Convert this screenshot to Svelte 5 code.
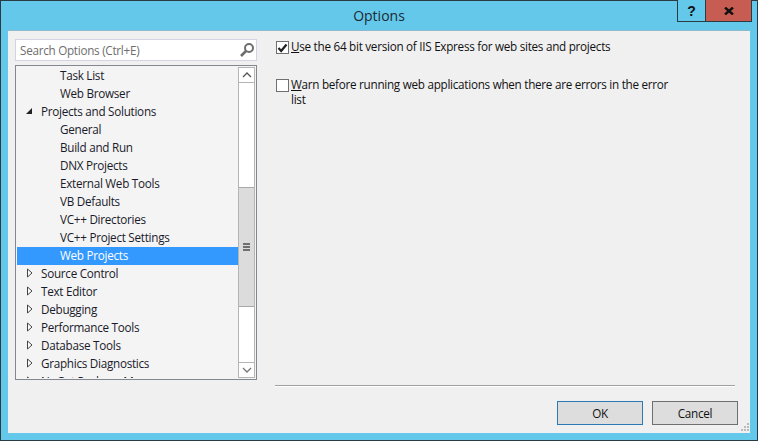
<script>
  const rows = [
    { label: "Task List", depth: 1 },
    { label: "Web Browser", depth: 1 },
    { label: "Projects and Solutions", depth: 0, open: true },
    { label: "General", depth: 1 },
    { label: "Build and Run", depth: 1 },
    { label: "DNX Projects", depth: 1 },
    { label: "External Web Tools", depth: 1 },
    { label: "VB Defaults", depth: 1 },
    { label: "VC++ Directories", depth: 1 },
    { label: "VC++ Project Settings", depth: 1 },
    { label: "Web Projects", depth: 1, selected: true },
    { label: "Source Control", depth: 0 },
    { label: "Text Editor", depth: 0 },
    { label: "Debugging", depth: 0 },
    { label: "Performance Tools", depth: 0 },
    { label: "Database Tools", depth: 0 },
    { label: "Graphics Diagnostics", depth: 0 },
    { label: "NuGet Package Manager", depth: 0 },
  ];
</script>

<div class="window">
  <header class="titlebar">
    <span class="title">Options</span>
    <div class="controls">
      <button class="help">?</button>
      <button class="close">
        <svg width="10" height="8" viewBox="0 0 10 8">
          <path d="M1 0.5 L9 7.5 M9 0.5 L1 7.5" stroke="#111" stroke-width="2.4" fill="none" />
        </svg>
      </button>
    </div>
  </header>

  <div class="client">
    <div class="main">
      <aside class="side">
        <div class="search">
          <span>Search Options (Ctrl+E)</span>
          <svg width="16" height="16" viewBox="0 0 16 16">
            <circle cx="10" cy="6" r="4" fill="none" stroke="#6e6e6e" stroke-width="2" />
            <path d="M7 9 L2 14" stroke="#6e6e6e" stroke-width="2.6" />
          </svg>
        </div>
        <div class="tree">
          <div class="rows">
            {#each rows as row}
              <div class="row" class:selected={row.selected} class:child={row.depth === 1}>
                {#if row.depth === 0}
                  <svg class="arrow" width="8" height="10" viewBox="0 0 8 10">
                    {#if row.open}
                      <path d="M1 8 L7 8 L7 2 Z" fill="#222" />
                    {:else}
                      <path d="M2.5 1 L7 5 L2.5 9 Z" fill="#fff" stroke="#444" />
                    {/if}
                  </svg>
                {/if}
                <span>{row.label}</span>
              </div>
            {/each}
          </div>
          <div class="scrollbar">
            <div class="sb-btn">
              <svg width="10" height="6" viewBox="0 0 10 6"><path d="M1 5 L5 1 L9 5" fill="none" stroke="#555" stroke-width="1.3" /></svg>
            </div>
            <div class="track upper"></div>
            <div class="thumb"><i></i><i></i><i></i></div>
            <div class="track"></div>
            <div class="sb-btn">
              <svg width="10" height="6" viewBox="0 0 10 6"><path d="M1 1 L5 5 L9 1" fill="none" stroke="#777" stroke-width="1.3" /></svg>
            </div>
          </div>
        </div>
      </aside>

      <section class="page">
        <label class="check">
          <span class="box">
            <svg width="11" height="10" viewBox="0 0 11 10"><path d="M1.5 5 L4.2 8 L9.5 1.5" fill="none" stroke="#222" stroke-width="2.2" /></svg>
          </span>
          <span class="text"><u>U</u>se the 64 bit version of IIS Express for web sites and projects</span>
        </label>
        <label class="check">
          <span class="box"></span>
          <span class="text"><u>W</u>arn before running web applications when there are errors in the error list</span>
        </label>
      </section>
    </div>

    <footer class="footer">
      <div class="rule"></div>
      <div class="buttons">
        <button class="btn default">OK</button>
        <button class="btn">Cancel</button>
      </div>
    </footer>
    <svg class="grip" width="9" height="9" viewBox="0 0 9 9">
      <path d="M7 0h2v2h-2z M4 3h2v2h-2z M7 3h2v2h-2z M1 6h2v2h-2z M4 6h2v2h-2z M7 6h2v2h-2z" fill="#bbb" />
    </svg>
  </div>
</div>

<style>
  :global(body) {
    margin: 0;
    font-family: "Open Sans", "Noto Sans", sans-serif;
  }

  .window {
    width: 758px;
    height: 441px;
    box-sizing: border-box;
    background: #63c8ea;
    border: 1px solid #2b3b44;
    padding: 0 7px 7px;
    display: flex;
    flex-direction: column;
    color: #111;
    font-size: 11.7px;
    letter-spacing: -0.27px;
  }

  .titlebar {
    height: 29px;
    flex: none;
    position: relative;
    display: flex;
    justify-content: center;
    align-items: center;
  }

  .title {
    font-size: 14px;
    letter-spacing: 0;
    color: #1b2a33;
  }

  .controls {
    position: absolute;
    top: -1px;
    right: -2px;
    display: flex;
    border: 1px solid #2b3b44;
    border-top: 0;
    height: 21px;
  }

  .controls button {
    border: 0;
    padding: 0;
    margin: 0;
    display: flex;
    align-items: center;
    justify-content: center;
  }

  .help {
    width: 28px;
    background: #63c8ea;
    border-right: 1px solid #2b3b44 !important;
    font: bold 14px "Liberation Sans", sans-serif;
    color: #111;
  }

  .close {
    width: 45px;
    background: #c75d52;
  }

  .client {
    flex: 1;
    background: #f0f0f0;
    position: relative;
    display: flex;
    flex-direction: column;
    border-top: 1px solid #8fb8cc;
    min-height: 0;
  }

  .main {
    flex: 1;
    display: flex;
    min-height: 0;
    padding: 8px 0 0 7px;
  }

  .side {
    width: 242px;
    flex: none;
    display: flex;
    flex-direction: column;
    gap: 4px;
  }

  .search {
    height: 22px;
    box-sizing: border-box;
    background: #fff;
    border: 1px solid #d3d3e4;
    display: flex;
    align-items: center;
    justify-content: space-between;
    padding: 0 1px 0 4px;
    color: #6d6d6d;
  }

  .tree {
    height: 315px;
    box-sizing: border-box;
    background: #f4f4f4;
    border: 1px solid #828790;
    display: flex;
    padding: 1px;
    overflow: hidden;
  }

  .rows {
    flex: 1;
    min-width: 0;
    overflow: hidden;
  }

  .row {
    height: 18px;
    box-sizing: border-box;
    display: flex;
    align-items: center;
    padding-left: 24px;
    padding-bottom: 2px;
    white-space: nowrap;
    color: #1a1a2a;
  }

  .row.child {
    padding-left: 43px;
  }

  .row.selected {
    background: #3399ff;
    color: #fff;
  }

  .arrow {
    margin-left: -16px;
    margin-right: 8px;
  }

  .scrollbar {
    width: 17px;
    flex: none;
    display: flex;
    flex-direction: column;
    background: #fff;
    border-left: 1px solid #b5b5b5;
    border-right: 1px solid #b5b5b5;
    box-sizing: border-box;
  }

  .sb-btn {
    height: 16px;
    flex: none;
    display: flex;
    align-items: center;
    justify-content: center;
    background: #fff;
    box-sizing: border-box;
    border-top: 1px solid #b5b5b5;
    border-bottom: 1px solid #b5b5b5;
  }

  .track {
    flex: 1;
  }

  .track.upper {
    flex: none;
    height: 104px;
  }

  .thumb {
    height: 118px;
    flex: none;
    background: #dcdcdc;
    border-top: 1px solid #a8a8a8;
    border-bottom: 1px solid #a8a8a8;
    display: flex;
    flex-direction: column;
    align-items: center;
    justify-content: center;
    gap: 1px;
  }

  .thumb i {
    display: block;
    width: 7px;
    height: 2px;
    background: #6f6f6f;
  }

  .page {
    flex: 1;
    padding: 0 20px 0 19px;
    display: flex;
    flex-direction: column;
    gap: 23px;
  }

  .check {
    display: flex;
    align-items: flex-start;
    gap: 2px;
    line-height: 15px;
    color: #111;
  }

  .box {
    width: 13px;
    height: 13px;
    margin-top: 2px;
    flex: none;
    background: #fff;
    border: 1px solid #707070;
    display: flex;
    align-items: center;
    justify-content: center;
    box-sizing: border-box;
  }

  .text {
    max-width: 380px;
  }

  .footer {
    flex: none;
    padding: 0 15px 8px 267px;
  }

  .rule {
    height: 1px;
    background: #a0a0a0;
    border-bottom: 1px solid #fff;
  }

  .buttons {
    display: flex;
    justify-content: flex-end;
    gap: 9px;
    margin: 14px -3px 0 0;
  }

  .btn {
    width: 86px;
    height: 24px;
    box-sizing: border-box;
    background: #dddddd;
    border: 1px solid #707070;
    font: inherit;
    letter-spacing: inherit;
    padding: 0;
    color: #111;
  }

  .btn.default {
    border-color: #2a78b5;
  }

  .grip {
    position: absolute;
    right: 1px;
    bottom: 1px;
  }
</style>
